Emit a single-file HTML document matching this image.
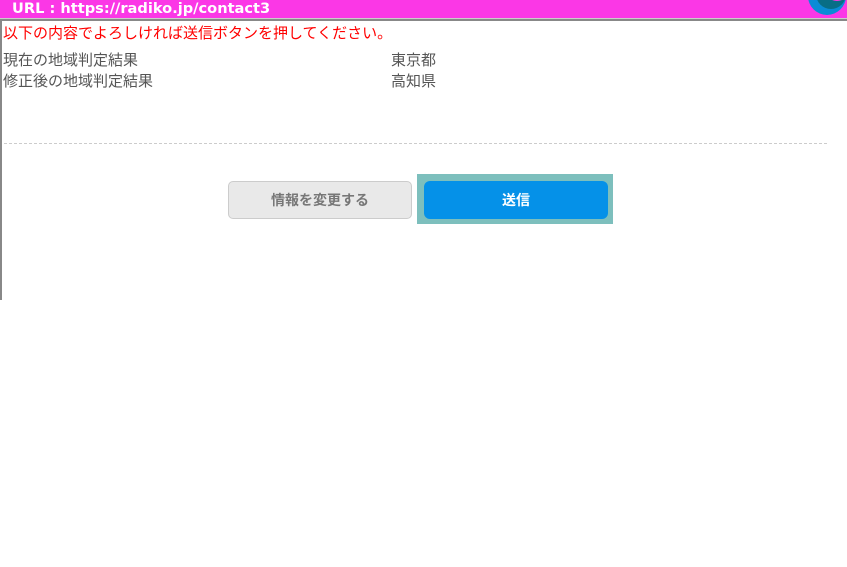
<!DOCTYPE html>
<html><head><meta charset="utf-8"><style>
body{margin:0;width:847px;height:567px;background:#fff;position:relative;overflow:hidden;font-family:"Liberation Sans","Noto Sans CJK JP",sans-serif}
.hdr{position:absolute;left:0;top:0;width:847px;height:18px;background:#fb37e6;color:#fff;font-weight:bold;font-size:14.6px;line-height:17px;font-family:"DejaVu Sans",sans-serif;overflow:hidden}
.hdr span{position:absolute;left:12px;top:0px}
.ln1{position:absolute;left:0;top:18px;width:847px;height:1px;background:#ccc}
.ln2{position:absolute;left:0;top:19px;width:847px;height:2px;background:#888}
.lb{position:absolute;left:0;top:21px;width:2px;height:279px;background:#888}
.t{position:absolute;font-size:15px;line-height:16px;white-space:nowrap}
.dash{position:absolute;left:4px;top:143px;width:823px;border-top:1px dashed #ccc}
.b1{position:absolute;left:228px;top:181px;width:182px;height:36px;border:1px solid #ccc;border-radius:5px;background:#e9e9e9;color:#777;font-weight:bold;font-size:14px;text-align:center;line-height:36px}
.ring{position:absolute;left:417px;top:174px;width:196px;height:50px;background:#7dbfbd}
.b2{position:absolute;left:424px;top:181px;width:184px;height:38px;border-radius:6px;background:#0591e8;color:#fff;font-weight:bold;font-size:14px;text-align:center;line-height:38px}
</style></head><body>
<div class="hdr"><span>URL : https://radiko.jp/contact3</span>
<svg style="position:absolute;left:805px;top:-24px" width="42" height="40" viewBox="0 0 42 40"><circle cx="22" cy="20" r="19" fill="#0a8cd6"/><circle cx="26" cy="18" r="15" fill="#086e86"/><circle cx="32" cy="13" r="12" fill="#fb37e6"/></svg></div>
<div class="ln1"></div><div class="ln2"></div><div class="lb"></div>
<div class="t" style="left:3px;top:26px;color:#f00">以下の内容でよろしければ送信ボタンを押してください。</div>
<div class="t" style="left:3px;top:53px;color:#555">現在の地域判定結果</div>
<div class="t" style="left:391px;top:53px;color:#555">東京都</div>
<div class="t" style="left:3px;top:74px;color:#555">修正後の地域判定結果</div>
<div class="t" style="left:391px;top:74px;color:#555">高知県</div>
<div class="dash"></div>
<div class="b1">情報を変更する</div>
<div class="ring"></div>
<div class="b2">送信</div>
</body></html>
